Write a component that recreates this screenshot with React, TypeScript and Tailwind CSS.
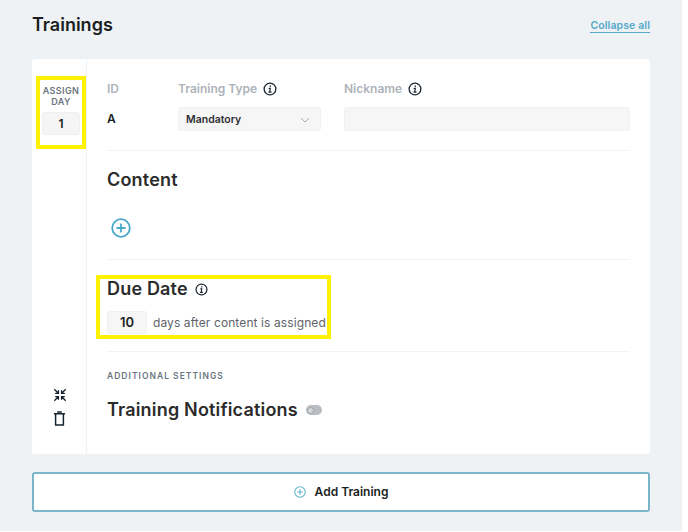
import React from "react";

const font = "font-['Inter','Liberation_Sans',sans-serif]";

const InfoIcon = ({ className }: { className: string }) => (
  <svg viewBox="0 0 16 16" fill="none" stroke="currentColor" className={className}>
    <circle cx="8" cy="8" r="6.7" strokeWidth="1.5" />
    <path d="M8.3 4.4v.6M7 7.2h1.3l-.6 4.2M6.7 11.5h2.6" strokeWidth="1.4" strokeLinecap="round" />
  </svg>
);

const PlusCircle = ({ className }: { className: string }) => (
  <svg viewBox="0 0 20 20" fill="none" stroke="currentColor" strokeWidth="1.8" className={className}>
    <circle cx="10" cy="10" r="8.8" />
    <path d="M10 5.5v9M5.5 10h9" />
  </svg>
);

const App: React.FC = () => {
  return (
    <div className={`${font} w-[682px] h-[531px] bg-[#eef2f5] overflow-hidden`}>
      <div className="w-[618px] ml-8">
        <header className="h-[59px] flex justify-between pt-[14px]">
          <h1 className="text-[18px] leading-[22px] font-semibold text-[#1b1f23]">Trainings</h1>
          <a className="mt-[5px] h-[14px] text-[10.5px] leading-[13px] font-semibold tracking-[0.01em] text-[#55a9c9] border-b border-[#55a9c9]">Collapse all</a>
        </header>

        <section className="flex h-[395px] bg-white rounded-[3px]">
          <aside className="w-[55px] shrink-0 border-r border-[#eef2f5] flex flex-col items-end">
            <div className="w-[50px] h-[73px] mt-[17px] border-4 border-[#fff200] flex flex-col items-center pt-[5px]">
              <div className="text-[9px] leading-[11px] font-semibold tracking-[0.04em] text-[#6b7580] text-center">ASSIGN<br />DAY</div>
              <div className="w-[38px] h-[23px] mt-[5px] rounded-[3px] bg-[#f5f5f5] border border-[#f0f0f0] flex items-center justify-center text-[12px] font-semibold text-[#1b1f23]">1</div>
            </div>
            <div className="mt-auto mb-[28px] w-full flex flex-col items-center gap-[9px] text-[#16232e]">
              <svg viewBox="0 0 16 16" fill="none" stroke="currentColor" strokeWidth="1.5" className="w-[14px] h-[14px] ml-px">
                <path d="M1.5 1.5l4 4M6.2 2.5v3.7H2.5M14.5 1.5l-4 4M9.8 2.5v3.7h3.7M1.5 14.5l4-4M6.2 13.5V9.8H2.5M14.5 14.5l-4-4M9.8 13.5V9.8h3.7" />
              </svg>
              <svg viewBox="0 0 14 16" fill="none" stroke="currentColor" strokeWidth="1.6" className="w-[13px] h-[15px] ml-px">
                <path d="M1 3h12M4.5 1h5M2.8 3v12h8.4V3" />
              </svg>
            </div>
          </aside>

          <main className="flex-1 ml-[20px] mr-[20px]">
            <div className="flex h-[92px] border-b border-[#f2f3f5] pt-[22px]">
              <div className="w-[71px]">
                <div className="h-4 text-[12px] leading-4 font-semibold text-[#adb3ba]">ID</div>
                <div className="mt-[14px] text-[12px] leading-4 font-semibold text-[#1b1f23]">A</div>
              </div>
              <div className="w-[143px]">
                <div className="h-4 flex items-center gap-[6px] text-[12px] font-semibold text-[#adb3ba]">Training Type <InfoIcon className="w-[14px] h-[14px] text-[#1b2733]" /></div>
                <div className="mt-[10px] h-[24px] pl-[7px] pr-2 pt-px rounded-[3px] bg-[#f6f6f6] border border-[#f1f1f1] flex items-center justify-between text-[10.5px] font-semibold text-[#2c2f33]">
                  Mandatory
                  <svg viewBox="0 0 10 6" fill="none" stroke="#a9aeb3" className="w-[10px] h-[6px] mr-[2px]"><path d="M1 1l4 4 4-4" /></svg>
                </div>
              </div>
              <div className="flex-1 ml-[23px]">
                <div className="h-4 flex items-center gap-[6px] text-[12px] font-semibold text-[#adb3ba]">Nickname <InfoIcon className="w-[14px] h-[14px] text-[#1b2733]" /></div>
                <div className="mt-[10px] h-[24px] rounded-[3px] bg-[#f6f6f6] border border-[#f1f1f1]"></div>
              </div>
            </div>

            <div className="h-[109px] border-b border-[#f2f3f5] pt-[18px]">
              <h2 className="text-[18px] leading-[22px] font-semibold tracking-[0.01em] text-[#2b2b2b]">Content</h2>
              <PlusCircle className="w-[20px] h-[20px] mt-[27px] ml-[4px] text-[#47a8c9]" />
            </div>

            <div className="h-[92px] border-b border-[#f2f3f5] relative">
              <div className="absolute left-[-11px] top-[15px] w-[235px] h-[64px] border-4 border-[#fff200]"></div>
              <div className="flex items-center gap-[7px] pt-[19px]">
                <h2 className="text-[18px] leading-[20px] font-semibold tracking-[0.01em] text-[#2b2b2b]">Due Date</h2>
                <InfoIcon className="w-[13px] h-[13px] text-[#1b2733]" />
              </div>
              <div className="flex items-center gap-[6px] mt-[12px]">
                <div className="w-[40px] h-[23px] rounded-[3px] bg-[#f6f6f6] border border-[#f1f1f1] flex items-center justify-center text-[13px] font-semibold text-[#1b1f23]">10</div>
                <span className="text-[12px] tracking-[0.1px] text-[#60646a]">days after content is assigned</span>
              </div>
            </div>

            <div className="pt-[19px]">
              <div className="text-[8.5px] leading-[11px] font-semibold tracking-[0.12em] text-[#6b7580]">ADDITIONAL SETTINGS</div>
              <div className="flex items-center gap-[8px] mt-[17px]">
                <h2 className="text-[18px] leading-[22px] font-semibold tracking-[0.01em] text-[#2b2b2b]">Training Notifications</h2>
                <div className="w-4 h-[10px] rounded-full bg-[#b9bdc1] flex items-center pl-[1.5px]">
                  <div className="w-[7px] h-[7px] rounded-full bg-[#d6d9db] border border-[#9da2a6]"></div>
                </div>
              </div>
            </div>
          </main>
        </section>

        <button className="mt-[18px] w-full h-[40px] bg-white rounded-[3px] border-2 border-[#7ab6c9] flex items-center justify-center gap-[9px] text-[12px] font-semibold text-[#1b1f23]">
          <PlusCircle className="w-[12px] h-[12px] text-[#5fb1cb]" />
          Add Training
        </button>
      </div>
    </div>
  );
};

export default App;
